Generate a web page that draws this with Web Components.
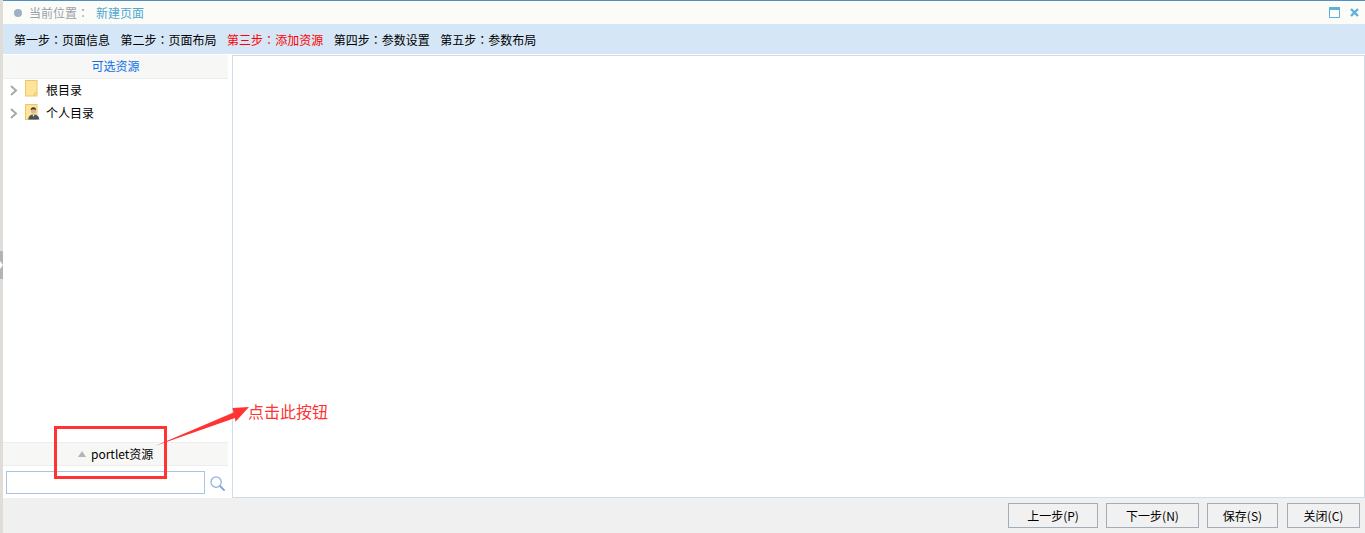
<!DOCTYPE html>
<html lang="zh"><head><meta charset="utf-8">
<style>
html,body{margin:0;padding:0;height:533px;overflow:hidden;background:#f0f0f0;font:12px/16px "Noto Sans CJK SC","Liberation Sans",sans-serif;color:#000}
</style></head><body>
<app-shell>
  <title-bar></title-bar>
  <step-bar></step-bar>
  <res-panel slot="main"></res-panel>
  <canvas-panel slot="main"></canvas-panel>
  <foot-bar slot="foot"></foot-bar>
  <call-out slot="over"></call-out>
</app-shell>
<script>
function def(name,html){customElements.define(name,class extends HTMLElement{constructor(){super();this.attachShadow({mode:'open'}).innerHTML=html}})}
const C='<span lang="zh-TW" style="font-family:\'Noto Sans CJK TC\',sans-serif">：</span>';
def('app-shell',`<style>
:host{display:grid;grid-template-columns:3px 1fr;width:1365px;height:533px;position:relative}
.strip{background:#e0ddd8;position:relative}
.handle{position:absolute;left:0;top:251px;width:3px;height:28px;background:#b4b4b4}
.handle i{position:absolute;left:0;top:10px;width:0;height:0;border-left:3px solid #fff;border-top:4px solid transparent;border-bottom:4px solid transparent}
.col{display:flex;flex-direction:column;min-width:0;height:533px}
.main{display:flex;height:444px;background:#fff;flex:none}
</style>
<div class="strip"><div class="handle"><i></i></div></div>
<div class="col"><slot></slot><div class="main"><slot name="main"></slot></div><slot name="foot"></slot></div>
<slot name="over"></slot>`);
def('title-bar',`<style>
:host{display:flex;align-items:center;height:23px;border-top:1px solid #4f8fc4;background:#fbfbf8;padding-left:11px;font-size:12px;color:#9aa0a6;flex:none}
.dot{width:8px;height:8px;border-radius:50%;background:#9db0c4;margin-right:7px}
.cur{color:#4fa7cf;margin-left:7px}
.sp{flex:1}
svg{display:block}
</style><span class="dot"></span><span>当前位置${C}</span><span class="cur">新建页面</span><span class="sp"></span>
<svg width="11" height="11" viewBox="0 0 11 11" style="margin-right:10px"><rect x=".5" y=".5" width="10" height="10" fill="#fff" stroke="#5fb1d8"/><rect x="0" y="0" width="11" height="3" fill="#5fb1d8"/></svg>
<svg width="9" height="9" viewBox="0 0 9 9" style="margin-right:6px"><path d="M1 1l7 7M8 1l-7 7" stroke="#5fb1d8" stroke-width="2.4"/></svg>`);
def('step-bar',`<style>
:host{display:flex;align-items:center;height:30px;box-sizing:border-box;padding:1px 0 0 11px;background:#d5e6f6;flex:none;font-size:12px;color:#000;gap:10.5px}
.on{color:#f00}
</style><span>第一步${C}页面信息</span><span>第二步${C}页面布局</span><span class="on">第三步${C}添加资源</span><span>第四步${C}参数设置</span><span>第五步${C}参数布局</span>`);
def('tree-row',`<style>
:host{display:flex;align-items:center;height:23px;font-size:12px;color:#000}
.chev{margin:0 7px 0 6px}
.ic{margin-right:8px;margin-top:-4px;width:13px}
.tx{margin-top:-2px}
</style><svg class="chev" width="9" height="11" viewBox="0 0 9 11"><path d="M2 1l5 4.5-5 4.5" fill="none" stroke="#a9a9a9" stroke-width="2"/></svg>
<span class="ic"><slot name="icon"></slot></span><span class="tx"><slot></slot></span>`);
def('res-panel',`<style>
:host{display:flex;flex-direction:column;width:225px;flex:none;background:#fff;box-sizing:border-box;margin-top:1px}
.h{height:23px;line-height:21px;text-align:center;color:#0f6fe8;background:#f7f7f5;border-bottom:1px solid #ededed;font-size:12px;flex:none}
.tree{flex:1}
.p{height:24px;box-sizing:border-box;border-top:1px solid #ededed;border-bottom:1px solid #ededed;background:#f7f7f5;display:flex;align-items:center;padding:0 0 1px 75px;flex:none;gap:5px;color:#000}
.tri{width:0;height:0;border-left:4.5px solid transparent;border-right:4.5px solid transparent;border-bottom:6.500px solid #b4b4b4}
.s{height:32px;display:flex;align-items:flex-start;padding:5px 0 0 3px;box-sizing:border-box;flex:none;gap:5px}
.in{width:199px;height:23px;box-sizing:border-box;border:1px solid #aac4e6;background:#fff}
svg{display:block}
.mag{margin-top:5px}
</style>
<div class="h">可选资源</div>
<div class="tree">
<tree-row><svg slot="icon" width="13" height="17" viewBox="0 0 13 17" style="display:block"><rect x=".5" y=".5" width="11.500" height="15.500" fill="#fde49a" stroke="#ecc766"/><path d="M9.500 16v-3h3" fill="none" stroke="#ecc766"/></svg>根目录</tree-row>
<tree-row><svg slot="icon" width="15" height="16" viewBox="0 0 15 16" style="display:block;overflow:visible"><rect x=".5" y=".5" width="11.500" height="15" fill="#fde49a" stroke="#ecc766"/><path d="M3.300 15.500c0-3 2-5 5.200-5s5.800 2 5.800 5z" fill="#46525e"/><path d="M7.500 10.500l1 2.500 1-2.500z" fill="#fff"/><ellipse cx="8.400" cy="6.500" rx="2.500" ry="3.200" fill="#e4b48a"/><path d="M5.700 6.200C5.500 2.500 11.200 2.300 11 6.200 9.500 4.800 7.200 4.800 5.700 6.200z" fill="#3c3530"/></svg>个人目录</tree-row>
</div>
<div class="p"><span class="tri"></span><span>portlet资源</span></div>
<div class="s"><div class="in"></div><svg class="mag" width="16" height="16" viewBox="0 0 17 17"><circle cx="6.500" cy="6.500" r="5.500" fill="none" stroke="#8fb0e0" stroke-width="1.300"/><path d="M10.500 10.500l5 5" stroke="#7f9fd6" stroke-width="2"/></svg></div>`);
def('canvas-panel',`<style>
:host{display:block;flex:none;width:1133px;margin:1px 0 0 4px;height:443px;box-sizing:border-box;border:1px solid #cfdde8;background:#fff}
</style>`);
def('foot-bar',`<style>
:host{display:flex;justify-content:flex-end;align-items:flex-start;height:35px;background:#f0f0f0;padding:5px 5px 0 0;box-sizing:border-box;flex:none;gap:8px}
button{all:unset;box-sizing:border-box;height:25px;border:1px solid #a3adb8;background:#f1f1f1;text-align:center;font:12px/23px "Noto Sans CJK SC","Liberation Sans",sans-serif;color:#000}
</style><button style="width:90px">上一步(P)</button><button style="width:93px">下一步(N)</button><button style="width:71px;margin-right:1px">保存(S)</button><button style="width:73px">关闭(C)</button>`);
def('call-out',`<style>
:host{display:block;position:absolute;left:0;top:0;width:0;height:0;overflow:visible;color:#f33}
.box{position:absolute;left:54px;top:426px;width:113px;height:53px;box-sizing:border-box;border:3px solid #f33}
svg{position:absolute;left:150px;top:400px;overflow:visible}
.t{position:absolute;left:248px;top:400px;font-size:16px;line-height:22px;white-space:nowrap}
</style><div class="box"></div>
<svg width="100" height="50" viewBox="150 400 100 50"><path d="M155 446L233.500 412.500 232.500 408 249 407 235.500 421.700 235 418z" fill="#f33"/></svg>
<div class="t">点击此按钮</div>`);
</script>
</body></html>
